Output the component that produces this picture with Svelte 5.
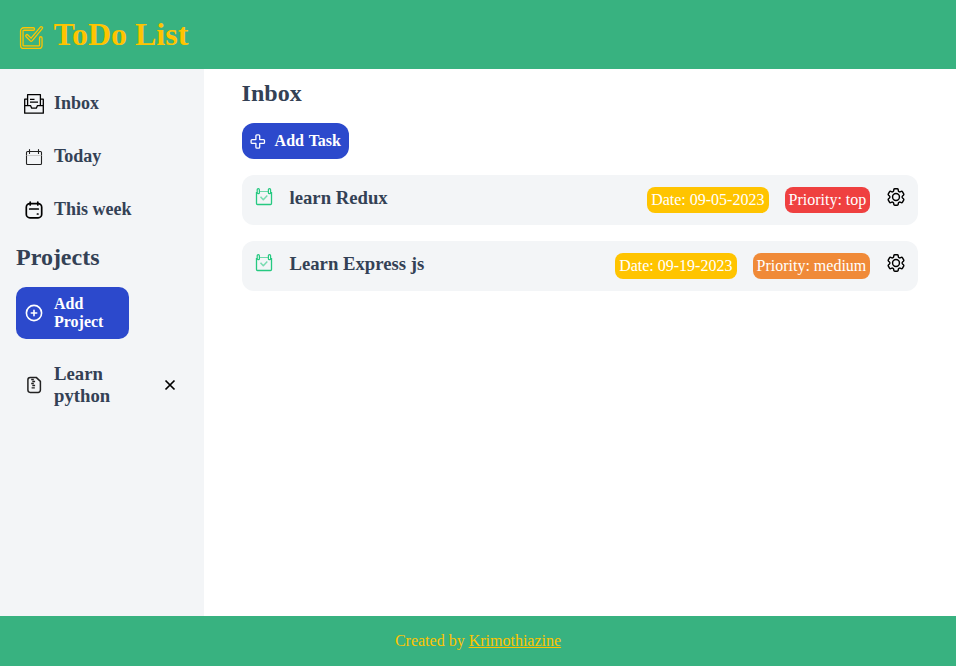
<script>
  const tasks = [
    { title: 'learn Redux', date: '09-05-2023', priority: 'top' },
    { title: 'Learn Express js', date: '09-19-2023', priority: 'medium' }
  ];
</script>

<div class="page">
  <header>
    <svg class="logo" width="24" height="24" viewBox="0 0 24 24" fill="none" stroke-linecap="round" stroke-linejoin="round">
      <path d="M13.3 3H3.8a2 2 0 0 0-2 2v14.2a2 2 0 0 0 2 2h15a2 2 0 0 0 2-2v-7.2" stroke="#ffc400" stroke-width="3.8" />
      <path d="M13.3 3H3.8a2 2 0 0 0-2 2v14.2a2 2 0 0 0 2 2h15a2 2 0 0 0 2-2v-7.2" stroke="#38b280" stroke-width="1.2" />
      <path d="m7 9.8 4.2 4.2L21.3 1.9" stroke="#ffc400" stroke-width="3.8" />
      <path d="m7 9.8 4.2 4.2L21.3 1.9" stroke="#38b280" stroke-width="1.2" />
    </svg>
    <h1>ToDo List</h1>
  </header>

  <div class="body">
    <aside>
      <nav>
        <div class="item">
          <svg width="20" height="20" viewBox="0 0 20 20" fill="none" stroke="#000" stroke-width="1.3" stroke-linejoin="round">
            <path d="M3.6 5.2H.7v14h18.6v-14h-2.9M3.6 11.5V.7h12.8v10.8M.7 11.6h5.8l1.2 2.6h4.6l1.2-2.6h5.8M6 5.3h4.5M6 8.2h8" />
          </svg>
          <span>Inbox</span>
        </div>
        <div class="item">
          <svg width="20" height="20" viewBox="0 0 20 20" fill="none" stroke="#222" stroke-width="1.1" stroke-linecap="round">
            <rect x="2.5" y="4.5" width="15" height="13" rx="1" />
            <path d="M5.5 2.5v4M14.5 2.5v4" />
            <path d="M3 8.5h14" stroke="#ccc" />
          </svg>
          <span>Today</span>
        </div>
        <div class="item">
          <svg width="20" height="20" viewBox="0 0 20 20" fill="none" stroke="#000" stroke-width="1.7" stroke-linecap="round">
            <rect x="2.3" y="3.6" width="15.4" height="14.2" rx="3.6" />
            <path d="M6.2 2v3M13.8 2v3M5.7 9h8.6M13.4 14h.6" />
          </svg>
          <span>This week</span>
        </div>
      </nav>
      <h2>Projects</h2>
      <button class="add-project">
        <svg width="20" height="20" viewBox="0 0 20 20" fill="none" stroke="#fff" stroke-width="1.6" stroke-linecap="round">
          <circle cx="10" cy="10" r="7.6" /><path d="M10 7.3v5.4M7.3 10h5.4" />
        </svg>
        <span>Add Project</span>
      </button>
      <div class="project">
        <svg width="20" height="20" viewBox="0 0 20 20" fill="none" stroke="#222" stroke-width="1.5" stroke-linejoin="round">
          <path d="M6.2 2.4h6l4.2 4v8.7a2.3 2.3 0 0 1-2.3 2.3H6.2a2.3 2.3 0 0 1-2.3-2.3V4.7a2.3 2.3 0 0 1 2.3-2.3Z" />
          <path d="M7.2 4.5h2.6M8.3 6.5h2.8M7.2 8.5h2.6M8.3 10.5h2.8M7.6 12.8h3.2" stroke-width="1.3" />
        </svg>
        <span>Learn python</span>
        <svg class="close" width="12" height="12" viewBox="0 0 12 12" stroke="#000" stroke-width="1.7">
          <path d="m1.5 1.5 9 9M10.5 1.5l-9 9" />
        </svg>
      </div>
    </aside>

    <main>
      <h2>Inbox</h2>
      <button class="add-task">
        <svg width="16" height="16" viewBox="0 0 16 16" fill="none" stroke="#fff" stroke-width="1.3" stroke-linejoin="round">
          <path d="M6.6.8h1.8q1 0 1 1v3.8h3.8q1 0 1 1v1.8q0 1-1 1H9.4v3.8q0 1-1 1H6.6q-1 0-1-1V9.4H1.8q-1 0-1-1V6.6q0-1 1-1h3.8V1.8q0-1 1-1Z" transform="translate(.3 1)" />
        </svg>
        <span>Add Task</span>
      </button>
      <div class="tasks">
        {#each tasks as task}
          <div class="task">
            <svg class="check" width="18" height="18" viewBox="0 0 18 18" fill="none" stroke="#26c981" stroke-linejoin="round">
              <path d="M1.5 4v11.5q0 1 1 1h13q1 0 1-1V4" stroke-width="1.3" />
              <path d="M5 3.5h8" opacity=".65" />
              <rect x="2.2" y=".7" width="2.2" height="5" rx="1" stroke-width="1.2" />
              <rect x="13.4" y=".7" width="2.2" height="5" rx="1" stroke-width="1.2" />
              <path d="m5.5 8.7 2.8 3 4-4.1" stroke-width="1.5" opacity=".6" />
            </svg>
            <h3>{task.title}</h3>
            <span class="tag date">Date: {task.date}</span>
            <span class="tag {task.priority}">Priority: {task.priority}</span>
            <svg class="gear" width="20" height="20" viewBox="1 1 22 22" fill="none" stroke="#000" stroke-width="1.6" stroke-linejoin="round">
              <path d="M9.594 3.94c.09-.542.56-.94 1.11-.94h2.593c.55 0 1.02.398 1.11.94l.213 1.281c.063.374.313.686.645.87.074.04.147.083.22.127.325.196.72.257 1.075.124l1.217-.456a1.125 1.125 0 0 1 1.37.49l1.296 2.247a1.125 1.125 0 0 1-.26 1.431l-1.003.827c-.293.241-.438.613-.43.992a7.723 7.723 0 0 1 0 .255c-.008.378.137.75.43.991l1.004.827c.424.35.534.955.26 1.43l-1.298 2.247a1.125 1.125 0 0 1-1.369.491l-1.217-.456c-.355-.133-.75-.072-1.076.124a6.47 6.47 0 0 1-.22.128c-.331.183-.581.495-.644.869l-.213 1.281c-.09.543-.56.94-1.11.94h-2.594c-.55 0-1.019-.398-1.11-.94l-.213-1.281c-.062-.374-.312-.686-.644-.87a6.52 6.52 0 0 1-.22-.127c-.325-.196-.72-.257-1.076-.124l-1.217.456a1.125 1.125 0 0 1-1.369-.49l-1.297-2.247a1.125 1.125 0 0 1 .26-1.431l1.004-.827c.292-.24.437-.613.43-.991a6.932 6.932 0 0 1 0-.255c.007-.38-.138-.751-.43-.992l-1.004-.827a1.125 1.125 0 0 1-.26-1.43l1.297-2.247a1.125 1.125 0 0 1 1.37-.491l1.216.456c.356.133.751.072 1.076-.124.072-.044.146-.086.22-.128.332-.183.582-.495.644-.869l.214-1.28Z" />
              <circle cx="12" cy="12" r="3.8" />
            </svg>
          </div>
        {/each}
      </div>
    </main>
  </div>

  <footer><p>Created by <a href="#top">Krimothiazine</a></p></footer>
</div>

<style>
  :global(body) { margin: 0; }
  .page {
    height: 666px;
    display: flex;
    flex-direction: column;
    font-family: "Liberation Serif", "Times New Roman", serif;
    font-size: 16px;
    color: #334155;
  }
  h1, h2, h3, p { margin: 0; }
  svg { display: block; flex: none; overflow: visible; }
  header {
    height: 69px;
    box-sizing: border-box;
    padding-left: 20px;
    display: flex;
    align-items: center;
    gap: 9.5px;
    background: #38b280;
    color: #ffc400;
  }
  .logo { margin-top: 6px; }
  h1 { font-size: 32px; line-height: 37px; }
  .body { flex: 1; display: flex; }
  aside { width: 204px; box-sizing: border-box; padding: 16px; background: #f3f5f7; }
  .item {
    height: 37px;
    margin-bottom: 16px;
    padding-left: 8px;
    display: flex;
    align-items: center;
    gap: 10px;
    font-size: 18px;
    font-weight: bold;
  }
  .item svg { margin-top: 1px; }
  h2 { font-size: 24px; line-height: 28px; }
  aside h2 { margin: -1px 0 16px; }
  button {
    border: 0;
    background: #2c49cc;
    color: #fff;
    font: bold 16px/18px "Liberation Serif", "Times New Roman", serif;
    display: flex;
    align-items: center;
    text-align: left;
  }
  .add-project { width: 113px; height: 52px; padding: 0 8px; gap: 10px; border-radius: 10px; }
  .add-project span { width: 55px; }
  .project {
    margin-top: 24px;
    padding: 0 12px 0 8px;
    display: flex;
    align-items: center;
    gap: 10px;
    font-size: 18.72px;
    line-height: 22px;
    font-weight: bold;
  }
  .project span { width: 70px; }
  .close { margin-left: auto; }
  main { flex: 1; padding: 10px 38px 10px 37.6px; }
  .add-task { width: 107px; height: 36px; margin-top: 16px; padding: 0 8px; gap: 9px; border-radius: 12px; white-space: nowrap; word-spacing: 1px; }
  .tasks { margin-top: 16px; display: flex; flex-direction: column; gap: 16px; }
  .task {
    height: 50px;
    box-sizing: border-box;
    padding: 12px 12px 12px 13px;
    display: flex;
    align-items: flex-start;
    border-radius: 12px;
    background: #f3f5f7;
  }
  .check { margin-top: 1px; }
  h3 { margin-left: 16.9px; margin-right: auto; font-size: 18.72px; line-height: 22px; }
  .tag { height: 26px; line-height: 26px; padding: 0 3.7px; border-radius: 8px; color: #fff; }
  .date { background: #ffc400; margin-right: 16px; padding: 0 4.4px 0 4.1px; }
  .top { background: #ef4040; }
  .medium { background: #f08a38; }
  .gear { margin-left: 16px; }
  footer {
    height: 50px;
    display: flex;
    align-items: center;
    justify-content: center;
    background: #38b280;
    color: #ffc400;
  }
  a { color: inherit; text-decoration: underline; }
</style>
